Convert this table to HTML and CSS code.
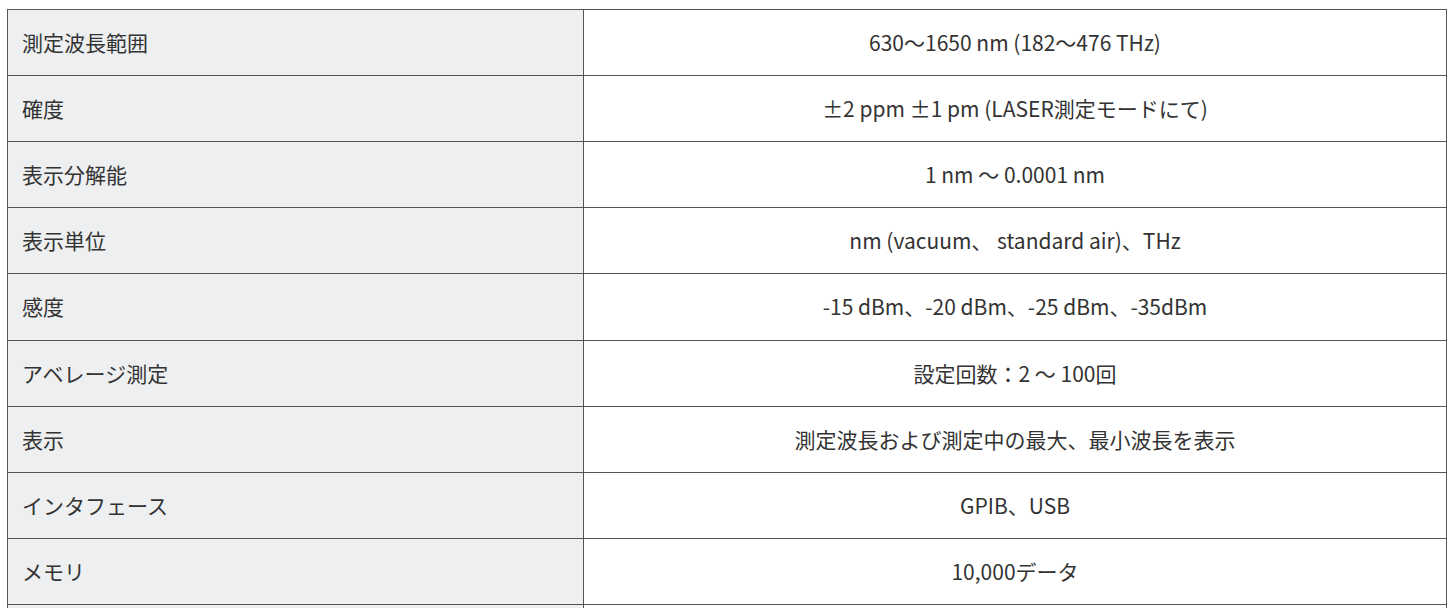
FILE: index.html
```html
<!DOCTYPE html>
<html lang="ja">
<head>
<meta charset="utf-8">
<link rel="stylesheet" href="styles.css">
</head>
<body>
<table class="spec">
  <colgroup>
    <col class="spec-col-label">
    <col class="spec-col-value">
  </colgroup>
  <tbody>
    <tr><th class="spec-label">測定波長範囲</th><td class="spec-value">630～1650 nm (182～476 THz)</td></tr>
    <tr><th class="spec-label">確度</th><td class="spec-value">±2 ppm ±1 pm (LASER測定モードにて)</td></tr>
    <tr><th class="spec-label">表示分解能</th><td class="spec-value">1 nm ～ 0.0001 nm</td></tr>
    <tr><th class="spec-label">表示単位</th><td class="spec-value">nm (vacuum、 standard air)、THz</td></tr>
    <tr><th class="spec-label">感度</th><td class="spec-value">-15 dBm、-20 dBm、-25 dBm、-35dBm</td></tr>
    <tr><th class="spec-label">アベレージ測定</th><td class="spec-value">設定回数：2 ～ 100回</td></tr>
    <tr><th class="spec-label">表示</th><td class="spec-value">測定波長および測定中の最大、最小波長を表示</td></tr>
    <tr><th class="spec-label">インタフェース</th><td class="spec-value">GPIB、USB</td></tr>
    <tr><th class="spec-label">メモリ</th><td class="spec-value">10,000データ</td></tr>
    <tr class="spec-row-empty"><th class="spec-label"></th><td class="spec-value"></td></tr>
  </tbody>
</table>
</body>
</html>
```

FILE: styles.css
```css
html, body {
  margin: 0;
  background: #ffffff;
}
body {
  padding: 9px 3px 0 7px;
  font-family: "Noto Sans CJK JP", "Noto Sans", sans-serif;
  color: #333333;
}
.spec {
  width: 1440px;
  border-collapse: collapse;
  table-layout: fixed;
}
.spec-col-label {
  width: 576px;
}
.spec-label,
.spec-value {
  border: 1px solid #555555;
  padding: 15px 14px;
  font-size: 21px;
  line-height: 35.11px;
  font-weight: normal;
  vertical-align: middle;
}
.spec-row-empty .spec-label,
.spec-row-empty .spec-value {
  height: 35px;
}
.spec-label {
  text-align: left;
  background: #eeeff1;
}
.spec-value {
  text-align: center;
  background: #ffffff;
}
```
